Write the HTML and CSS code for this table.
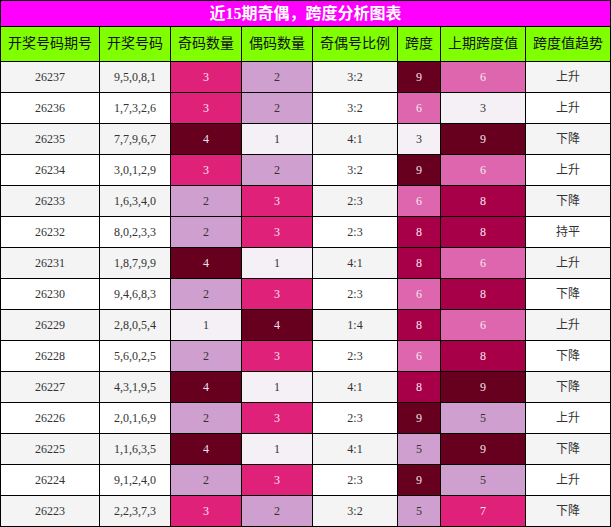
FILE: index.html
```html
<!DOCTYPE html>
<html lang="zh">
<head>
<meta charset="utf-8">
<title>近15期奇偶，跨度分析图表</title>
<link rel="stylesheet" href="styles.css">
</head>
<body>
<table class="chart">
  <colgroup>
    <col class="c-issue"><col class="c-nums"><col class="c-cnt"><col class="c-cnt"><col class="c-ratio"><col class="c-span"><col class="c-prev"><col class="c-trend">
  </colgroup>
  <thead>
    <tr><th colspan="8" class="title">近15期奇偶，跨度分析图表</th></tr>
    <tr class="head">
      <th>开奖号码期号</th><th>开奖号码</th><th>奇码数量</th><th>偶码数量</th><th>奇偶号比例</th><th>跨度</th><th>上期跨度值</th><th>跨度值趋势</th>
    </tr>
  </thead>
  <tbody>
    <tr class="alt"><td>26237</td><td>9,5,0,8,1</td><td class="k3">3</td><td class="k2">2</td><td>3:2</td><td class="s9">9</td><td class="s6">6</td><td>上升</td></tr>
    <tr><td>26236</td><td>1,7,3,2,6</td><td class="k3">3</td><td class="k2">2</td><td>3:2</td><td class="s6">6</td><td class="s3">3</td><td>上升</td></tr>
    <tr class="alt"><td>26235</td><td>7,7,9,6,7</td><td class="k4">4</td><td class="k1">1</td><td>4:1</td><td class="s3">3</td><td class="s9">9</td><td>下降</td></tr>
    <tr><td>26234</td><td>3,0,1,2,9</td><td class="k3">3</td><td class="k2">2</td><td>3:2</td><td class="s9">9</td><td class="s6">6</td><td>上升</td></tr>
    <tr class="alt"><td>26233</td><td>1,6,3,4,0</td><td class="k2">2</td><td class="k3">3</td><td>2:3</td><td class="s6">6</td><td class="s8">8</td><td>下降</td></tr>
    <tr><td>26232</td><td>8,0,2,3,3</td><td class="k2">2</td><td class="k3">3</td><td>2:3</td><td class="s8">8</td><td class="s8">8</td><td>持平</td></tr>
    <tr class="alt"><td>26231</td><td>1,8,7,9,9</td><td class="k4">4</td><td class="k1">1</td><td>4:1</td><td class="s8">8</td><td class="s6">6</td><td>上升</td></tr>
    <tr><td>26230</td><td>9,4,6,8,3</td><td class="k2">2</td><td class="k3">3</td><td>2:3</td><td class="s6">6</td><td class="s8">8</td><td>下降</td></tr>
    <tr class="alt"><td>26229</td><td>2,8,0,5,4</td><td class="k1">1</td><td class="k4">4</td><td>1:4</td><td class="s8">8</td><td class="s6">6</td><td>上升</td></tr>
    <tr><td>26228</td><td>5,6,0,2,5</td><td class="k2">2</td><td class="k3">3</td><td>2:3</td><td class="s6">6</td><td class="s8">8</td><td>下降</td></tr>
    <tr class="alt"><td>26227</td><td>4,3,1,9,5</td><td class="k4">4</td><td class="k1">1</td><td>4:1</td><td class="s8">8</td><td class="s9">9</td><td>下降</td></tr>
    <tr><td>26226</td><td>2,0,1,6,9</td><td class="k2">2</td><td class="k3">3</td><td>2:3</td><td class="s9">9</td><td class="s5">5</td><td>上升</td></tr>
    <tr class="alt"><td>26225</td><td>1,1,6,3,5</td><td class="k4">4</td><td class="k1">1</td><td>4:1</td><td class="s5">5</td><td class="s9">9</td><td>下降</td></tr>
    <tr><td>26224</td><td>9,1,2,4,0</td><td class="k2">2</td><td class="k3">3</td><td>2:3</td><td class="s9">9</td><td class="s5">5</td><td>上升</td></tr>
    <tr class="alt"><td>26223</td><td>2,2,3,7,3</td><td class="k3">3</td><td class="k2">2</td><td>3:2</td><td class="s5">5</td><td class="s7">7</td><td>下降</td></tr>
  </tbody>
</table>
</body>
</html>
```
FILE: styles.css
```css
html, body {
  margin: 0;
  padding: 0;
  background: #ffffff;
}

.chart {
  width: 611px;
  table-layout: fixed;
  border-collapse: separate;
  border-spacing: 1px;
  background: #000000;
  font-family: "Liberation Serif", "Noto Sans CJK SC", serif;
}

.c-issue { width: 98px; }
.c-nums { width: 70px; }
.c-cnt { width: 70px; }
.c-ratio { width: 84px; }
.c-span { width: 42px; }
.c-prev { width: 84px; }
.c-trend { width: 84px; }

.chart th,
.chart td {
  padding: 0;
  text-align: center;
  vertical-align: middle;
  overflow: hidden;
  white-space: nowrap;
}

.title {
  height: 25px;
  background: #ff00ff;
  color: #ffffff;
  font-size: 16px;
  font-weight: bold;
  line-height: 25px;
}

.head th {
  height: 34px;
  background: #7fff00;
  color: #111111;
  font-size: 14px;
  font-weight: normal;
  line-height: 34px;
}

.chart td {
  height: 30px;
  font-size: 12px;
  line-height: 30px;
  color: #333333;
  background: #ffffff;
}

.chart tr.alt td {
  background: #f4f4f4;
}

.chart tr td.k1, .chart tr td.s3 { background: #f5f0f6; color: #333333; }
.chart tr td.k2, .chart tr td.s5 { background: #cfa0cf; color: #333333; }
.chart tr td.k3, .chart tr td.s7 { background: #e0217a; color: #f7e6ef; }
.chart tr td.k4, .chart tr td.s9 { background: #67001f; color: #f2e2e8; }
.chart tr td.s6 { background: #dd66ae; color: #f7e6ef; }
.chart tr td.s8 { background: #a80048; color: #f7e6ef; }
```
